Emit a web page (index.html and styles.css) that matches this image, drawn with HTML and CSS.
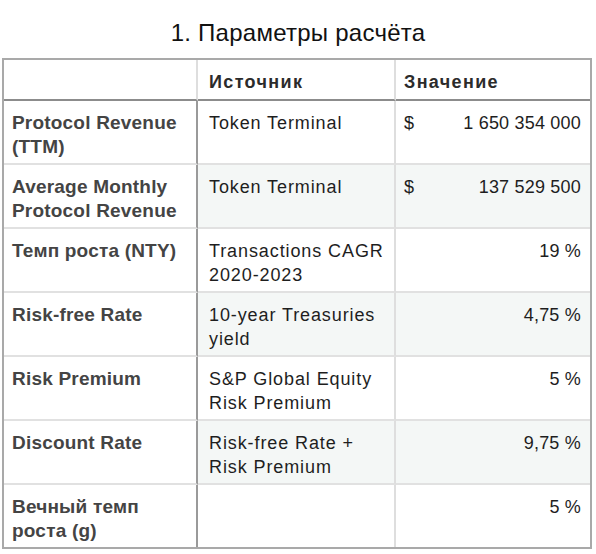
FILE: index.html
```html
<!DOCTYPE html>
<html lang="ru">
<head>
<meta charset="utf-8">
<title>Параметры расчёта</title>
<link rel="stylesheet" href="styles.css">
</head>
<body>
<h1 class="title">1. Параметры расчёта</h1>
<table class="params">
  <colgroup>
    <col class="c1"><col class="c2"><col class="c3">
  </colgroup>
  <thead>
    <tr><th class="name"></th><th>Источник</th><th class="last">Значение</th></tr>
  </thead>
  <tbody>
    <tr><td class="name">Protocol Revenue (TTM)</td><td class="src">Token Terminal</td><td class="val last"><span class="cur">$</span><span class="num">1 650 354 000</span></td></tr>
    <tr class="alt"><td class="name">Average Monthly Protocol Revenue</td><td class="src">Token Terminal</td><td class="val last"><span class="cur">$</span><span class="num">137 529 500</span></td></tr>
    <tr><td class="name">Темп роста (NTY)</td><td class="src">Transactions CAGR 2020-2023</td><td class="val last"><span class="num">19 %</span></td></tr>
    <tr class="alt"><td class="name">Risk-free Rate</td><td class="src">10-year Treasuries yield</td><td class="val last"><span class="num">4,75 %</span></td></tr>
    <tr><td class="name">Risk Premium</td><td class="src">S&amp;P Global Equity Risk Premium</td><td class="val last"><span class="num">5 %</span></td></tr>
    <tr class="alt"><td class="name">Discount Rate</td><td class="src">Risk-free Rate + Risk Premium</td><td class="val last"><span class="num">9,75 %</span></td></tr>
    <tr class="end"><td class="name">Вечный темп роста (g)</td><td class="src"></td><td class="val last"><span class="num">5 %</span></td></tr>
  </tbody>
</table>
</body>
</html>
```
FILE: styles.css
```css
html, body {
  margin: 0;
  padding: 0;
  background: #fff;
}
body {
  font-family: "Liberation Sans", Arial, sans-serif;
  color: #1e1e1e;
}
.title {
  margin: 0;
  height: 58px;
  padding-top: 18px;
  box-sizing: border-box;
  text-align: center;
  font-size: 24px;
  line-height: 30px;
  font-weight: normal;
  letter-spacing: 0.25px;
  color: #111;
}
.params {
  margin-left: 2px;
  width: 590px;
  table-layout: fixed;
  border-collapse: separate;
  border-spacing: 0;
  border: 2px solid #a9a9a9;
  font-size: 18px;
  line-height: 24px;
}
.c1 { width: 194px; }
.c2 { width: 198px; }
.c3 { width: 194px; }
th, td {
  box-sizing: border-box;
  text-align: left;
  vertical-align: top;
  border-right: 2px solid #dedede;
  border-bottom: 2px solid #e1e1e1;
  padding: 10px 9px 4px 8px;
  height: 64px;
}
th {
  height: 41px;
  padding: 10px 9px 5px 8px;
  font-weight: bold;
  color: #2b2b2b;
  letter-spacing: 1.35px;
  border-bottom-color: #8c8c8c;
}
td.name {
  border-right-color: #9a9a9a;
  color: #444;
  font-weight: bold;
  font-size: 19px;
  letter-spacing: 0.2px;
}
td.src {
  padding-left: 11px;
  letter-spacing: 0.9px;
}
th:nth-child(2) {
  padding-left: 11px;
}
.last {
  border-right: none;
}
.end td {
  border-bottom: none;
  height: 62px;
}
.alt td:not(.name) {
  background: #f4f7f6;
}
.val {
  text-align: right;
  letter-spacing: 0.2px;
}
.cur {
  float: left;
}
```
